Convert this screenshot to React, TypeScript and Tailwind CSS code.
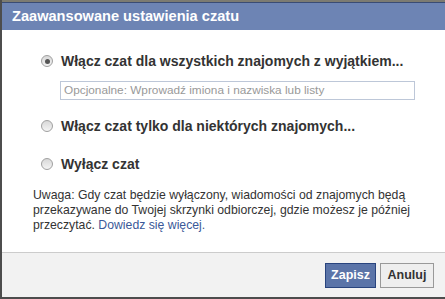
import React from "react";

const font = { fontFamily: '"Liberation Sans", Arial, sans-serif' };

function Radio({ checked }: { checked?: boolean }) {
  return (
    <span className="grid h-[12px] w-[12px] shrink-0 place-items-center rounded-full border border-[#a0a0a0] bg-gradient-to-b from-[#d8d8d8] to-[#f4f4f4]">
      {checked && <span className="h-[5px] w-[5px] rounded-full bg-[#555]" />}
    </span>
  );
}

const options = [
  { label: "Włącz czat dla wszystkich znajomych z wyjątkiem...", checked: true },
  { label: "Włącz czat tylko dla niektórych znajomych..." },
  { label: "Wyłącz czat" },
];

export default function App() {
  return (
    <div
      className="flex h-[299px] w-[445px] flex-col bg-[#4d4d4d] pb-[2px] pl-[2px]"
      style={font}
    >
      <div className="h-[2px] bg-[#7c7b72]" />
      <div className="h-[1px] bg-[#3a4c74]" />
      <div className="flex flex-1 flex-col bg-white">
        <div className="flex h-[27px] items-center bg-[#6d84b4] px-[10px] text-[14.6px] font-bold text-white">
          Zaawansowane ustawienia czatu
        </div>

        <div className="flex-1 pl-[31px] pr-[12px]">
          <div className="ml-[8px] pt-[23px]">
            <label className="flex h-[16px] items-center gap-[8px] text-[14px] font-bold text-[#333]">
              <Radio checked={options[0].checked} />
              {options[0].label}
            </label>
            <div className="ml-[19px] mt-[12px] flex h-[19px] w-[355px] items-center border border-[#bdc7d8] px-[3px] text-[11.8px] text-[#999]">
              Opcjonalne: Wprowadź imiona i nazwiska lub listy
            </div>
            <label className="mt-[18px] flex h-[16px] items-center gap-[8px] text-[14px] font-bold text-[#333]">
              <Radio />
              {options[1].label}
            </label>
            <label className="mt-[22px] flex h-[16px] items-center gap-[8px] text-[14px] font-bold text-[#333]">
              <Radio />
              {options[2].label}
            </label>
          </div>
          <p className="mt-[16px] text-[12.25px] leading-[15px] text-[#333]">
            Uwaga: Gdy czat będzie wyłączony, wiadomości od znajomych będą
            przekazywane do Twojej skrzynki odbiorczej, gdzie możesz je później
            przeczytać. <span className="text-[#3b5998]">Dowiedz się więcej.</span>
          </p>
        </div>

        <div className="flex h-[45px] items-center justify-end gap-[4px] border-t border-[#ccc] bg-[#f2f2f2] pr-[11px]">
          <button className="h-[25px] w-[51px] border border-[#29447e] bg-[#5b74a8] text-[12.5px] font-bold text-white">
            Zapisz
          </button>
          <button className="h-[25px] w-[54px] border border-[#999] bg-[#eee] text-[12.5px] font-bold text-[#333]">
            Anuluj
          </button>
        </div>
      </div>
    </div>
  );
}
